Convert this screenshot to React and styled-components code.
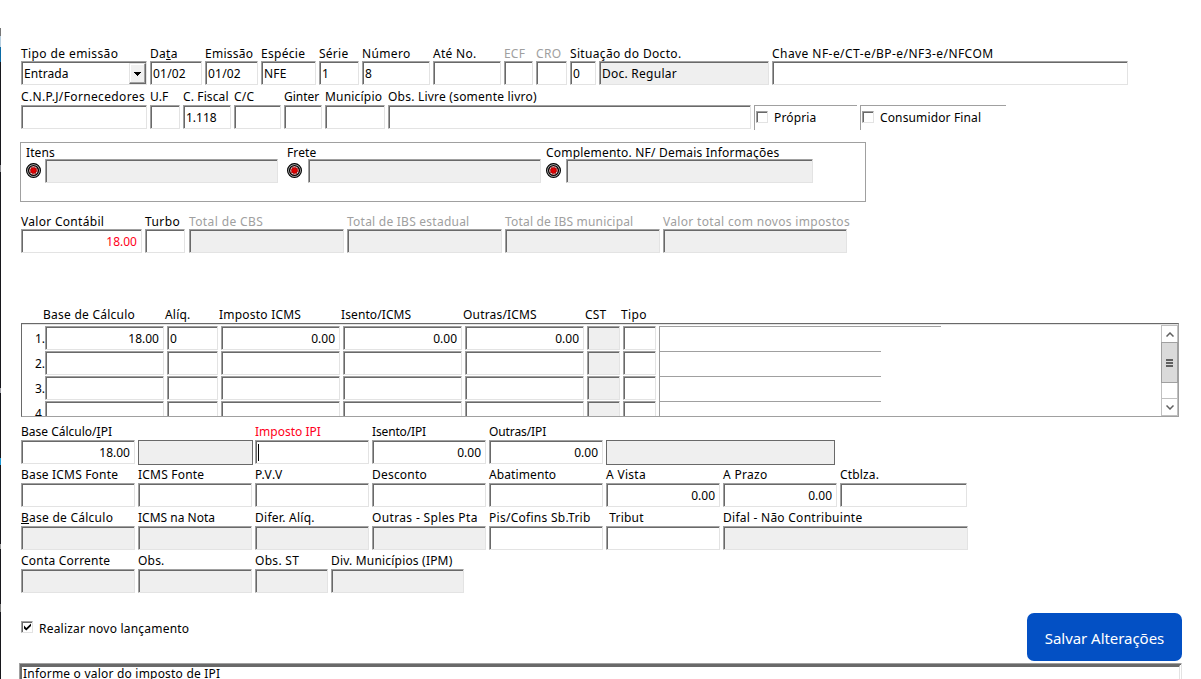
import React from 'react';
import styled, { createGlobalStyle, css } from 'styled-components';

const Global = createGlobalStyle`
  * { box-sizing: border-box; }
  body { margin: 0; background: #fff; overflow: hidden; }
`;

const Screen = styled.div`
  display: flex;
  width: 1201px;
  height: 679px;
  overflow: hidden;
  background: #fff;
  color: #000;
  font: 12px/16px "Noto Sans", "Open Sans", sans-serif;
`;

const Edge = styled.div`
  flex: none;
  width: 1px;
  background: linear-gradient(#fff 0 28px, #777 28px 36px, #b8cfe0 36px 47px, #0a6aa5 47px 62px, #17171c 62px 165px,
    #85858a 165px 172px, #17171c 172px 388px, #a0a0a8 388px 393px, #17171c 393px 458px, #1d9bd8 458px 465px,
    #17171c 465px 544px, #999 544px 549px, #17171c 549px 604px, #777 604px 612px, #17171c 612px);
`;

const Form = styled.form`
  flex: none;
  display: flex;
  flex-direction: column;
  width: 1200px;
  padding: 46px 0 0 20px;
`;

const Row = styled.div`
  flex: none;
  display: flex;
  align-items: flex-end;
  gap: 3px;
  height: ${(p) => p.$h || 43}px;
  margin-top: ${(p) => p.$mt || 0}px;
`;

const FieldBox = styled.label`
  flex: none;
  display: flex;
  flex-direction: column;
  justify-content: space-between;
  height: ${(p) => p.$h || 40}px;
  width: ${(p) => p.$w}px;
  margin-left: ${(p) => p.$ml || 0}px;
`;

const Caption = styled.span`
  display: block;
  height: 15px;
  white-space: pre;
  color: ${(p) => p.$color || '#000'};
  letter-spacing: ${(p) => p.$ls || 0}px;
`;

const Input = styled.span`
  flex: none;
  display: block;
  height: 24px;
  width: ${(p) => (p.$w ? `${p.$w}px` : '100%')};
  padding: 4px ${(p) => (p.$right ? 4 : 1)}px 0 2px;
  overflow: hidden;
  white-space: nowrap;
  text-align: ${(p) => (p.$right ? 'right' : 'left')};
  letter-spacing: ${(p) => p.$track || 0}px;
  color: ${(p) => p.$color || '#000'};
  background: ${(p) => (p.$off ? '#efefef' : '#fff')};
  border: 1px solid;
  border-color: #a0a0a0 #e3e3e3 #e3e3e3 #a0a0a0;
  box-shadow: inset 1px 1px 0 #696969;
  ${(p) => p.$flat && css`
    height: 25px;
    margin-bottom: -1px;
    border-color: #696969;
    box-shadow: none;
  `}
`;

const Caret = styled.i`
  display: block;
  width: 1px;
  height: 17px;
  margin-top: -1px;
  background: #000;
`;

const Select = styled(Input)`
  display: flex;
  justify-content: space-between;
  padding: 1px 0 0 2px;
`;

const SelectText = styled.span`
  padding-top: 3px;
  letter-spacing: 0.1px;
`;

const DropButton = styled.span`
  display: grid;
  place-items: center;
  width: 17px;
  height: 21px;
  background: #f0f0f0;
  border: 1px solid;
  border-color: #e3e3e3 #696969 #696969 #e3e3e3;
  box-shadow: inset -1px -1px 0 #a0a0a0, inset 1px 1px 0 #fff;
`;

const OpenFrame = styled.div`
  flex: none;
  display: flex;
  width: ${(p) => p.$w}px;
  height: 25px;
  border: solid #a0a0a0;
  border-width: 1px 0 0 1px;
`;

const CheckFrame = styled(OpenFrame)`
  gap: 6px;
  margin-bottom: -1px;
  padding: 4px 0 0 1px;
  letter-spacing: 0.13px;
`;

const CheckBox = styled.span`
  flex: none;
  display: grid;
  width: 12px;
  height: 12px;
  margin-top: 1px;
  border: 1px solid;
  border-color: #a0a0a0 #e3e3e3 #e3e3e3 #a0a0a0;
  box-shadow: inset 1px 1px 0 #696969;
`;

const Group = styled.div`
  flex: none;
  display: flex;
  width: 846px;
  height: 60px;
  margin: 13px 0 0 -1px;
  padding: 2px 0 0 5px;
  border: 1px solid #a0a0a0;
`;

const GroupItem = styled.div`
  flex: none;
  width: ${(p) => p.$w}px;
`;

const GroupLine = styled.div`
  display: flex;
  align-items: flex-start;
  gap: ${(p) => p.$gap}px;
  margin-top: -1px;
`;

const RecordIcon = styled.svg`
  flex: none;
  margin-top: 4px;
`;

const Headers = styled.div`
  flex: none;
  display: flex;
  height: 16px;
  margin-top: 54px;
  padding-left: 22px;
`;

const HeaderCell = styled.span`
  flex: none;
  width: ${(p) => p.$w}px;
  letter-spacing: ${(p) => p.$ls || 0}px;
`;

const Table = styled.div`
  flex: none;
  display: flex;
  justify-content: space-between;
  width: 1158px;
  height: 94px;
  border: 1px solid;
  border-color: #696969 #a0a0a0 #a0a0a0 #696969;
  box-shadow: inset 0 1px 0 #e3e3e3;
  overflow: hidden;
`;

const TableRows = styled.div`
  padding-top: 2px;
`;

const TableRow = styled.div`
  display: flex;
  gap: 3px;
  height: 25px;
`;

const RowNumber = styled.span`
  width: 23px;
  margin-right: -3px;
  padding-top: 5px;
  text-align: right;
`;

const ScrollBar = styled.div`
  display: flex;
  flex-direction: column;
  width: 17px;
  height: 91px;
  margin-top: 1px;
  border: 1px solid #c0c0c0;
`;

const ScrollArrow = styled.div`
  display: grid;
  place-items: center;
  height: 16px;
`;

const ScrollThumb = styled.div`
  display: grid;
  place-items: center;
  height: 41px;
  margin: 0 -1px;
  background: #dadada;
  border: 1px solid #a0a0a0;
`;

const ScrollTrack = styled.div`
  flex: 1;
  border-bottom: 1px solid #c0c0c0;
`;

const Footer = styled.div`
  flex: none;
  display: flex;
  justify-content: space-between;
  width: 1161px;
  margin-top: 20px;
`;

const FooterCheck = styled.div`
  display: flex;
  gap: 6px;
  padding-top: 7px;
  letter-spacing: 0.21px;
`;

const FooterText = styled.span`
  padding-top: 1px;
`;

const SaveButton = styled.button`
  width: 155px;
  height: 48px;
  padding: 1px 0 0;
  border: 0;
  border-radius: 7px;
  background: #0350c4;
  color: #fff;
  font: 15px/22px "Noto Sans", sans-serif;
  letter-spacing: -0.05px;
  white-space: nowrap;
`;

const Status = styled.div`
  flex: none;
  width: 1163px;
  height: 20px;
  margin: 2px 0 0 -2px;
  border: 2px solid;
  border-color: #a0a0a0 #e3e3e3 #e3e3e3 #a0a0a0;
  border-width: 1px 1px 1px 1px;
  box-shadow: inset 1px 1px 0 #696969;
  padding: 1px;
`;

const StatusText = styled.div`
  height: 17px;
  border: solid;
  border-width: 2px 1px 0 1px;
  border-color: #696969 #e3e3e3 #fff #696969;
  padding-left: 1px;
  line-height: 14px;
  letter-spacing: 0.21px;
`;

function Field({ label, w, ml, ls, color, value, labelColor, h, ...rest }) {
  return (
    <FieldBox $w={w} $ml={ml} $h={h}>
      <Caption $color={labelColor} $ls={ls}>{label}</Caption>
      <Input $color={color} {...rest}>{value}</Input>
    </FieldBox>
  );
}

function Record() {
  return (
    <RecordIcon width="15" height="15" viewBox="0 0 15 15">
      <circle cx="7.5" cy="7.5" r="6.9" fill="#c8c8c8" stroke="#000" strokeWidth="1.2" />
      <circle cx="7.5" cy="7.5" r="4.9" fill="#fff" stroke="#000" strokeWidth="1.3" />
      <circle cx="7.5" cy="7.5" r="3.7" fill="none" stroke="#c00000" strokeWidth="1" strokeDasharray="1.5 1.4" />
      <circle cx="7.5" cy="7.5" r="3" fill="#e00000" stroke="#700" strokeWidth=".6" />
    </RecordIcon>
  );
}

const GREY = '#a0a0a0';
const tableRows = [
  { n: '1.', v: ['18.00', '0', '0.00', '0.00', '0.00'], tail: 282 },
  { n: '2.', v: [], tail: 222 },
  { n: '3.', v: [], tail: 222 },
  { n: '4.', v: [], tail: 222 },
];
const tableWidths = [119, 51, 119, 119, 119];

export default function App() {
  return (
    <Screen>
      <Global />
      <Edge />
      <Form>
        <Row $h={39}>
          <FieldBox $w={126} $h={39}>
            <Caption $ls={0.4}>Tipo de emissão</Caption>
            <Select>
              <SelectText>Entrada</SelectText>
              <DropButton>
                <svg width="7" height="4" shapeRendering="crispEdges"><path d="M0 0h7v1H6v1H5v1H4v1H3V3H2V2H1V1H0z" /></svg>
              </DropButton>
            </Select>
          </FieldBox>
          <Field w={52} h={39} ls={0.3} label={<>Da<u>t</u>a</>} value="01/02" $track={0.2} />
          <Field w={53} h={39} ls={0.25} label="Emissão" value="01/02" $track={0.2} />
          <Field w={55} h={39} ls={0.3} label="Espécie" value="NFE" $track={0.2} />
          <Field w={40} h={39} ls={0.25} label="Série" value="1" />
          <Field w={68} h={39} ls={0.35} label="Número" value="8" />
          <Field w={68} h={39} ls={0.3} label="Até No." />
          <Field w={29} h={39} ls={0.2} label="ECF" labelColor={GREY} />
          <Field w={31} h={39} ls={0.3} label="CRO" labelColor={GREY} />
          <Field w={26} h={39} ls={0.34} label="Situação do Docto." value="0" />
          <Field w={170} h={39} label="" value="Doc. Regular" $off $track={0.25} />
          <Field w={356} h={39} ls={0.44} label="Chave NF-e/CT-e/BP-e/NF3-e/NFCOM" />
        </Row>
        <Row $h={44}>
          <Field w={126} ls={0.36} label="C.N.P.J/Fornecedores" />
          <Field w={30} ls={0.1} label="U.F" />
          <Field w={48} ls={0.12} label="C. Fiscal" value="1.118" />
          <Field w={47} ls={0.2} label="C/C" />
          <Field w={38} label="Ginter" />
          <Field w={60} ls={0.2} label="Município" />
          <Field w={363} ls={0.22} label="Obs. Livre (somente livro)" />
          <CheckFrame $w={103}><CheckBox /><span>Própria</span></CheckFrame>
          <CheckFrame $w={146}><CheckBox /><span>Consumidor Final</span></CheckFrame>
        </Row>
        <Group>
          <GroupItem $w={261}>
            <Caption $ls={0.1}>Itens</Caption>
            <GroupLine $gap={4}><Record /><Input $w={233} $off /></GroupLine>
          </GroupItem>
          <GroupItem $w={259}>
            <Caption $ls={0.1}>Frete</Caption>
            <GroupLine $gap={6}><Record /><Input $w={233} $off /></GroupLine>
          </GroupItem>
          <GroupItem $w={267}>
            <Caption $ls={0.2}>Complemento. NF/ Demais Informações</Caption>
            <GroupLine $gap={5}><Record /><Input $w={247} $off /></GroupLine>
          </GroupItem>
        </Group>
        <Row $h={39} $mt={12}>
          <Field w={121} h={39} ls={0.3} label="Valor Contábil" value="18.00" color="#ff0020" $right />
          <Field w={40} h={39} ls={0.4} label="Turbo" />
          <Field w={155} h={39} ml={1} ls={0.38} label="Total de CBS" labelColor={GREY} $off />
          <Field w={155} h={39} ls={0.24} label="Total de IBS estadual" labelColor={GREY} $off />
          <Field w={155} h={39} ls={0.18} label="Total de IBS municipal" labelColor={GREY} $off />
          <Field w={184} h={39} ls={0.33} label="Valor total com novos impostos" labelColor={GREY} $off />
        </Row>
        <Headers>
          <HeaderCell $w={122} $ls={0.25}>Base de Cálculo</HeaderCell>
          <HeaderCell $w={54} $ls={0.2}>Alíq.</HeaderCell>
          <HeaderCell $w={122} $ls={0.22}>Imposto ICMS</HeaderCell>
          <HeaderCell $w={122} $ls={0.1}>Isento/ICMS</HeaderCell>
          <HeaderCell $w={122} $ls={0.18}>Outras/ICMS</HeaderCell>
          <HeaderCell $w={36} $ls={0.2}>CST</HeaderCell>
          <HeaderCell $w={36} $ls={0.4}>Tipo</HeaderCell>
        </Headers>
        <Table>
          <TableRows>
            {tableRows.map((r) => (
              <TableRow key={r.n}>
                <RowNumber>{r.n}</RowNumber>
                {tableWidths.map((w, i) => (
                  <Input key={i} $w={w} $right={i !== 1}>{r.v[i]}</Input>
                ))}
                <Input $w={33} $off />
                <Input $w={33} />
                <OpenFrame $w={r.tail} />
              </TableRow>
            ))}
          </TableRows>
          <ScrollBar>
            <ScrollArrow>
              <svg width="8" height="5" fill="none" stroke="#606060" strokeWidth="1.5"><path d="M.5 4.5 4 1l3.5 3.5" /></svg>
            </ScrollArrow>
            <ScrollThumb>
              <svg width="7" height="8" fill="#606060" shapeRendering="crispEdges"><path d="M0 0h7v2H0zM0 3h7v2H0zM0 6h7v2H0z" /></svg>
            </ScrollThumb>
            <ScrollTrack />
            <ScrollArrow>
              <svg width="8" height="5" fill="none" stroke="#606060" strokeWidth="1.5"><path d="M.5.5 4 4 7.5.5" /></svg>
            </ScrollArrow>
          </ScrollBar>
        </Table>
        <Row $h={40} $mt={7}>
          <Field w={114} label={<>Base Cálculo/<u>I</u>PI</>} value="18.00" $right />
          <Field w={115} label="" $off $flat />
          <Field w={114} ml={-1} label="Imposto IPI" labelColor="#ff0020" value={<Caret />} />
          <Field w={114} ls={-0.15} label="Isento/IPI" value="0.00" $right />
          <Field w={114} ls={-0.1} label="Outras/IPI" value="0.00" $right />
          <Field w={229} label="" $off $flat />
        </Row>
        <Row>
          <Field w={114} ls={0.18} label="Base ICMS Fonte" />
          <Field w={114} ls={0.2} label="ICMS Fonte" />
          <Field w={114} ls={0.7} label="P.V.V" />
          <Field w={114} ls={0.2} label="Desconto" />
          <Field w={114} ls={0.1} label="Abatimento" />
          <Field w={114} ls={0.3} label="A Vista" value="0.00" $right />
          <Field w={114} ls={0.3} label="A Prazo" value="0.00" $right />
          <Field w={127} ls={0.15} label="Ctblza." />
        </Row>
        <Row>
          <Field w={114} ls={0.25} label={<><u>B</u>ase de Cálculo</>} $off />
          <Field w={114} label="ICMS na Nota" $off />
          <Field w={114} ls={0.27} label="Difer. Alíq." $off />
          <Field w={114} ls={0.35} label="Outras - Sples Pta" $off />
          <Field w={114} ls={0.27} label="Pis/Cofins Sb.Trib" />
          <Field w={114} ls={0.2} label=" Tribut" />
          <Field w={245} ls={0.26} label="Difal - Não Contribuinte" $off />
        </Row>
        <Row>
          <Field w={114} ls={0.21} label="Conta Corrente" $off />
          <Field w={114} ls={0.2} label="Obs." $off />
          <Field w={73} ls={0.3} label="Obs. ST" $off />
          <Field w={133} ls={0.19} label="Div. Municípios (IPM)" $off />
        </Row>
        <Footer>
          <FooterCheck>
            <CheckBox>
              <svg width="10" height="10"><path d="M2 3.5v3L4.3 8.5 9 4V1.5L4.3 6z" /></svg>
            </CheckBox>
            <FooterText>Realizar novo lançamento</FooterText>
          </FooterCheck>
          <SaveButton type="button">Salvar Alterações</SaveButton>
        </Footer>
        <Status><StatusText>Informe o valor do imposto de IPI</StatusText></Status>
      </Form>
    </Screen>
  );
}
